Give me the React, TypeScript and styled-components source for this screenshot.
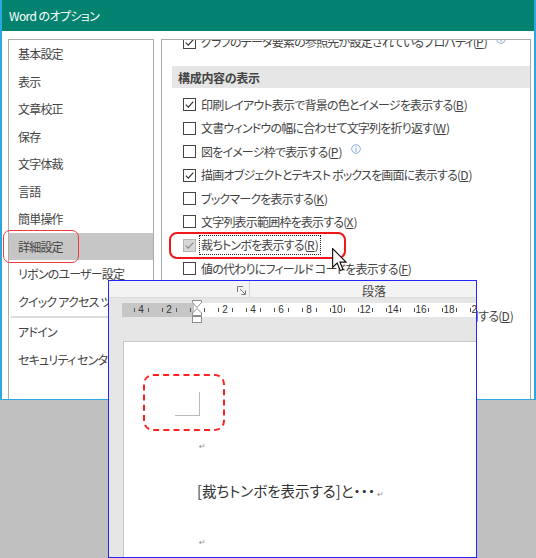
import styled, { createGlobalStyle } from "styled-components";
import { FC } from "react";

const GlobalStyle = createGlobalStyle`
  html, body {
    margin: 0;
    padding: 0;
  }
  body {
    width: 536px;
    height: 558px;
    overflow: hidden;
    background: #c0c0c0;
    font-family: "Noto Sans CJK JP", "Noto Sans", sans-serif;
    font-feature-settings: "palt";
    color: #444;
  }
`;

const Screen = styled.div`
  position: relative;
  width: 536px;
  height: 558px;
  overflow: hidden;
`;

/* ---------- Word options dialog ---------- */

const Dialog = styled.div`
  width: 536px;
  height: 400px;
  box-sizing: border-box;
  border: 2px solid #2aa8df;
  border-top: none;
  border-bottom-width: 1px;
  background: #fff;
  display: flex;
  flex-direction: column;
`;
const TitleBar = styled.div`
  height: 31px;
  flex-shrink: 0;
  display: flex;
  align-items: center;
  padding-left: 7px;
  background: #03836f;
  color: #fff;
  font-size: 12px;
  letter-spacing: -0.6px;
`;
const Body = styled.div`
  flex: 1;
  min-height: 0;
  display: flex;
  gap: 7px;
  padding: 8px 3px 0 6px;
`;
const Nav = styled.div`
  width: 146px;
  flex-shrink: 0;
  box-sizing: border-box;
  border: 1px solid #ababab;
  border-bottom: none;
  display: flex;
  flex-direction: column;
`;
const NavItem = styled.div<{ $selected?: boolean; $marked?: boolean }>`
  position: relative;
  height: 27.5px;
  flex-shrink: 0;
  display: flex;
  align-items: center;
  padding-left: 9px;
  font-size: 12px;
  letter-spacing: -0.8px;
  white-space: nowrap;
  color: #444;
  background: ${p => (p.$selected ? "#c6c6c6" : "transparent")};

  &::after {
    content: "";
    display: ${p => (p.$marked ? "block" : "none")};
    position: absolute;
    left: -6px;
    top: -3px;
    width: 76px;
    height: 33px;
    box-sizing: border-box;
    border: 1px solid #f03c3c;
    border-radius: 7px;
  }
`;
const NavSeparator = styled.div`
  height: 2px;
  margin: 1px 2px 0 2px;
  background: #dcdcdc;
  flex-shrink: 0;
`;
const Panel = styled.div`
  flex: 1;
  min-width: 0;
  box-sizing: border-box;
  border: 1px solid #ababab;
  border-bottom: none;
  padding-left: 10px;
  overflow: hidden;
`;
const PanelScroll = styled.div`
  margin-top: -9.7px;
`;
const SectionHeader = styled.div`
  height: 22px;
  margin: 12.3px 0 5.3px 0;
  display: flex;
  align-items: center;
  padding-left: 6px;
  background: #e6e6e6;
  font-size: 12px;
  font-weight: 700;
  letter-spacing: -0.3px;
  color: #444;
`;
const Row = styled.div<{ $marked?: boolean }>`
  position: relative;
  height: 23.4px;
  display: flex;
  align-items: center;
  padding-left: 11px;
  gap: 3px;
  font-size: 12px;
  letter-spacing: -0.8px;
  white-space: nowrap;
  color: #444;

  &::after {
    content: "";
    display: ${p => (p.$marked ? "block" : "none")};
    position: absolute;
    left: -3px;
    top: -1.3px;
    width: 177px;
    height: 27px;
    box-sizing: border-box;
    border: 2px solid #f01818;
    border-radius: 8px;
  }
`;
const Check = styled.span<{ $disabled?: boolean }>`
  width: 13px;
  height: 13px;
  flex-shrink: 0;
  box-sizing: border-box;
  border: 1px solid ${p => (p.$disabled ? "#b4b4b4" : "#444")};
  background: ${p => (p.$disabled ? "#d8d8d8" : "#fff")};
  display: flex;
  align-items: center;
  justify-content: center;
`;
const Label = styled.span<{ $focus?: boolean }>`
  padding: 1px 2px 1px 1px;
  line-height: 16px;
  border: 1px dotted ${p => (p.$focus ? "#222" : "transparent")};
`;
const AccessKey = styled.span`
  text-decoration: underline;
  text-underline-offset: 1px;
  letter-spacing: 0;
`;
const InfoSvg = styled.svg`
  width: 10px;
  height: 10px;
  margin-left: 3px;
  position: relative;
  top: -3px;
  flex-shrink: 0;
`;

/* ---------- Word document window ---------- */

const DocWindow = styled.div`
  position: absolute;
  left: 108px;
  top: 280px;
  width: 369px;
  height: 278px;
  box-sizing: border-box;
  border: 1px solid #2424ff;
  background: #e6e6e6;
  display: flex;
  flex-direction: column;
  overflow: hidden;
`;
const RibbonStrip = styled.div`
  height: 16px;
  flex-shrink: 0;
  display: flex;
  background: #f3f3f3;
  border-bottom: 1px solid #dcdcdc;
`;
const RibbonGroup = styled.div`
  width: 141px;
  flex-shrink: 0;
  box-sizing: border-box;
  display: flex;
  align-items: center;
  justify-content: flex-end;
  padding: 2px 3px 0 0;
  border-right: 1px solid #d2d2d2;
`;
const GroupLabel = styled.div`
  flex: 1;
  display: flex;
  align-items: center;
  padding: 3px 0 0 112px;
  font-size: 12px;
  color: #444;
`;
const Ruler = styled.div`
  position: relative;
  height: 14px;
  flex-shrink: 0;
  margin: 5px 0 0 13px;
  padding-left: 5px;
  display: flex;
  background: linear-gradient(to right, #c6c6c6 72px, #fff 72px);
`;
const RulerCell = styled.div`
  width: 28px;
  flex-shrink: 0;
  box-sizing: border-box;
  padding: 0 6.5px;
  display: flex;
  align-items: center;
  justify-content: space-between;
  font-family: "Liberation Sans", sans-serif;
  font-size: 10px;
  line-height: 14px;
  color: #333;
`;
const Tick = styled.span`
  width: 1px;
  height: 4px;
  background: #555;
`;
const IndentMarker = styled.svg`
  position: absolute;
  left: 70px;
  top: -3px;
  width: 10px;
  height: 23px;
`;
const Page = styled.div`
  position: relative;
  flex: 1;
  margin: 24px 0 0 14px;
  background: #fff;
  border-left: 1px solid #c6c6c6;
  border-top: 1px solid #c6c6c6;
`;
const CropMark = styled.div`
  width: 24px;
  height: 23px;
  margin: 50px 0 0 51px;
  border-right: 1px solid #b9b9b9;
  border-bottom: 1px solid #b9b9b9;
`;
const Paragraph = styled.div<{ $first?: boolean }>`
  margin-top: ${p => (p.$first ? "3px" : "0")};
  padding-left: 73px;
  height: 48px;
  line-height: 48px;
  font-size: 14.5px;
  color: #333;
  white-space: nowrap;
`;
const ParaMark = styled.span`
  margin-left: 2px;
  font-family: "DejaVu Sans", sans-serif;
  font-size: 8px;
  color: #8c8c8c;
`;
const DashedNote = styled.div`
  position: absolute;
  left: 19px;
  top: 32px;
  width: 82px;
  height: 57px;
  box-sizing: border-box;
  border: 2px dashed #ff2020;
  border-radius: 10px;
`;
const Cursor = styled.svg`
  position: absolute;
  left: 332px;
  top: 248px;
  width: 15px;
  height: 24px;
`;

const navTop = ["基本設定", "表示", "文章校正", "保存", "文字体裁", "言語", "簡単操作", "詳細設定", "リボンのユーザー設定", "クイック アクセス ツール バー"];
const navBottom = ["アドイン", "セキュリティ センター"];

type Opt = {
  text: string;
  key: string;
  checked?: boolean;
  box?: boolean;
  info?: boolean;
  disabled?: boolean;
  focus?: boolean;
  marked?: boolean;
  suffix?: string;
};

const chartOpt: Opt = { text: "グラフのデータ要素の参照先が設定されているプロパティ", key: "P", checked: true, box: true, info: true };

const displayOpts: Opt[] = [
  { text: "印刷レイアウト表示で背景の色とイメージを表示する", key: "B", checked: true, box: true },
  { text: "文書ウィンドウの幅に合わせて文字列を折り返す", key: "W", box: true },
  { text: "図をイメージ枠で表示する", key: "P", box: true, info: true },
  { text: "描画オブジェクトとテキスト ボックスを画面に表示する", key: "D", checked: true, box: true },
  { text: "ブックマークを表示する", key: "K", box: true },
  { text: "文字列表示範囲枠を表示する", key: "X", box: true },
  { text: "裁ちトンボを表示する", key: "R", checked: true, box: true, disabled: true, focus: true, marked: true },
  { text: "値の代わりにフィールド コードを表示する", key: "F", box: true },
  { text: "フィールドの網かけ表示", key: "H", suffix: ":" },
  { text: "下書き表示およびアウトライン表示で下書きフォントを使用する", key: "D", box: true },
];

const rulerLabels = ["4", "2", "", "2", "4", "6", "8", "10", "12", "14", "16", "18", "20"];

const CheckMark: FC<{ color: string }> = ({ color }) => (
  <svg width="11" height="11" viewBox="0 0 11 11">
    <path d="M1.8 5.6 L4.3 8.1 L9.3 2.6" fill="none" stroke={color} strokeWidth="1.2" />
  </svg>
);

const InfoIcon: FC = () => (
  <InfoSvg viewBox="0 0 10 10">
    <circle cx="5" cy="5" r="4.3" fill="none" stroke="#7ea2d6" strokeWidth="0.9" />
    <rect x="4.5" y="2.2" width="1" height="1" fill="#7ea2d6" />
    <rect x="4.5" y="4" width="1" height="3.8" fill="#7ea2d6" />
  </InfoSvg>
);

const OptionRow: FC<{ opt: Opt }> = ({ opt }) => (
  <Row $marked={opt.marked}>
    {opt.box && (
      <Check $disabled={opt.disabled}>
        {opt.checked && <CheckMark color={opt.disabled ? "#8a8a8a" : "#333"} />}
      </Check>
    )}
    <Label $focus={opt.focus}>
      {opt.text}(<AccessKey>{opt.key}</AccessKey>){opt.suffix}
    </Label>
    {opt.info && <InfoIcon />}
  </Row>
);

const Launcher: FC = () => (
  <svg width="9" height="9" viewBox="0 0 9 9">
    <path d="M0.5 6 V0.5 H6" fill="none" stroke="#777" strokeWidth="1" />
    <path d="M3 3 L8 8 M8.5 4.5 V8.5 H4.5" fill="none" stroke="#777" strokeWidth="1" />
  </svg>
);

export default function App() {
  return (
    <Screen>
      <GlobalStyle />
      <Dialog>
        <TitleBar>Word のオプション</TitleBar>
        <Body>
          <Nav>
            {navTop.map(n => (
              <NavItem key={n} $selected={n === "詳細設定"} $marked={n === "詳細設定"}>{n}</NavItem>
            ))}
            <NavSeparator />
            {navBottom.map(n => (
              <NavItem key={n}>{n}</NavItem>
            ))}
          </Nav>
          <Panel>
            <PanelScroll>
              <OptionRow opt={chartOpt} />
              <SectionHeader>構成内容の表示</SectionHeader>
              {displayOpts.map((o, i) => (
                <OptionRow key={i} opt={o} />
              ))}
            </PanelScroll>
          </Panel>
        </Body>
      </Dialog>

      <DocWindow>
        <RibbonStrip>
          <RibbonGroup>
            <Launcher />
          </RibbonGroup>
          <GroupLabel>段落</GroupLabel>
        </RibbonStrip>
        <Ruler>
          {rulerLabels.map((l, i) => (
            <RulerCell key={i}>
              <Tick />
              <span>{l}</span>
              <Tick />
            </RulerCell>
          ))}
          <IndentMarker viewBox="0 0 10 23">
            <path d="M0.5 0.5 H9.5 V2.5 L5 7.5 L0.5 2.5 Z" fill="#fff" stroke="#8c8c8c" strokeWidth="1" />
            <path d="M5 8.5 L9.5 13 V15.5 H0.5 V13 Z" fill="#fff" stroke="#8c8c8c" strokeWidth="1" />
            <rect x="0.5" y="16.5" width="9" height="6" fill="#fff" stroke="#8c8c8c" strokeWidth="1" />
          </IndentMarker>
        </Ruler>
        <Page>
          <CropMark />
          <Paragraph $first><ParaMark>↵</ParaMark></Paragraph>
          <Paragraph>[裁ちトンボを表示する]と・・・<ParaMark>↵</ParaMark></Paragraph>
          <Paragraph><ParaMark>↵</ParaMark></Paragraph>
          <DashedNote />
        </Page>
      </DocWindow>

      <Cursor viewBox="0 0 13 21">
        <path d="M0.5 0.5 V17 L4.4 13.2 L7.2 19.8 L9.6 18.8 L6.9 12.3 H12.2 Z" fill="#fff" stroke="#111" strokeWidth="1" />
      </Cursor>
    </Screen>
  );
}
